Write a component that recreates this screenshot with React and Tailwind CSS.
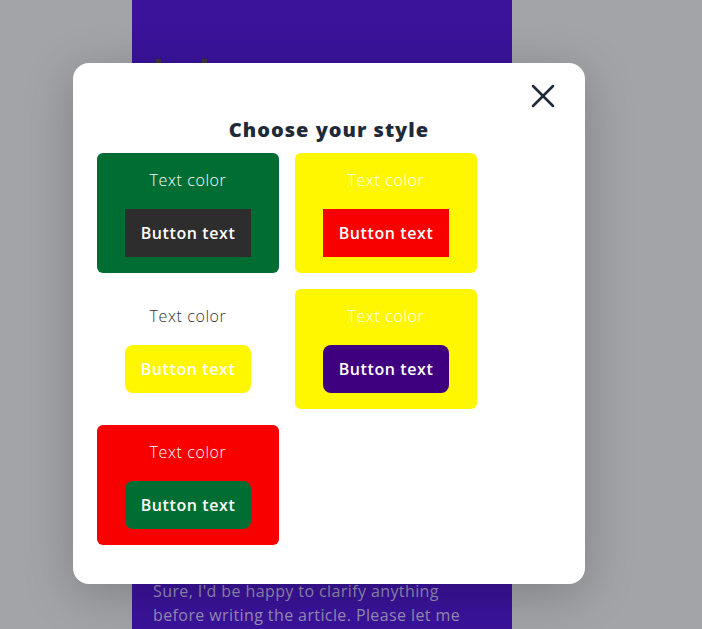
import React from "react";

const cards = [
  { bg: "bg-[#006e33]", text: "text-white", btn: "bg-[#2d2d2d]", btnRound: "" },
  { bg: "bg-[#fff700]", text: "text-white", btn: "bg-[#f80000]", btnRound: "" },
  { bg: "bg-white", text: "text-[#333333]", btn: "bg-[#fff700]", btnRound: "rounded-lg" },
  { bg: "bg-[#fff700]", text: "text-white", btn: "bg-[#3f0080]", btnRound: "rounded-lg" },
  { bg: "bg-[#f80000]", text: "text-white", btn: "bg-[#006e33]", btnRound: "rounded-lg" },
];

function Card({ c }) {
  return (
    <div className={`w-[182px] h-[120px] rounded-md ${c.bg} flex flex-col items-center pt-[15px]`}>
      <div className={`text-[16px] leading-[24px] font-light tracking-[0.6px] ${c.text}`}>Text color</div>
      <div className={`mt-[17px] w-[126px] h-[48px] ${c.btn} ${c.btnRound} flex items-center justify-center text-white text-[16px] font-semibold tracking-[0.6px]`}>
        Button text
      </div>
    </div>
  );
}

export default function App() {
  return (
    <div
      className="relative w-[702px] h-[629px] overflow-hidden bg-[#a3a4a8]"
      style={{ fontFamily: '"Open Sans", "Noto Sans", sans-serif' }}
    >
      <div className="ml-[132px] w-[380px] h-full bg-[#3a139a] flex flex-col">
        <div className="flex mt-[59px] pl-[24px] gap-[41px]">
          <div className="w-[5px] h-[6px] bg-[#3a3a3a]" />
          <div className="w-[5px] h-[6px] bg-[#3a3a3a]" />
        </div>
        <div className="mt-auto mb-[2px] pl-[21px] pr-[10px] text-[16px] leading-[24px] tracking-[0.4px] text-[#958db5]">
          Sure, I'd be happy to clarify anything
          <br />
          before writing the article. Please let me
        </div>
      </div>

      <div className="absolute left-[73px] top-[63px] w-[512px] h-[521px] bg-white rounded-2xl shadow-[0_10px_50px_rgba(0,0,0,0.22)] flex flex-col">
        <div className="flex justify-end pt-[21px] pr-[30px]">
          <svg width="24" height="24" viewBox="0 0 24 24" fill="none" stroke="#1f2937" strokeWidth="2.5" strokeLinecap="round">
            <line x1="2" y1="2" x2="22" y2="22" />
            <line x1="22" y1="2" x2="2" y2="22" />
          </svg>
        </div>
        <h2 className="mt-[8px] text-center text-[20px] leading-[28px] font-extrabold tracking-[1px] text-[#1f2937]">
          Choose your style
        </h2>
        <div className="mt-[9px] px-[24px] flex flex-wrap gap-4">
          {cards.map((c, i) => (
            <Card key={i} c={c} />
          ))}
        </div>
      </div>
    </div>
  );
}
